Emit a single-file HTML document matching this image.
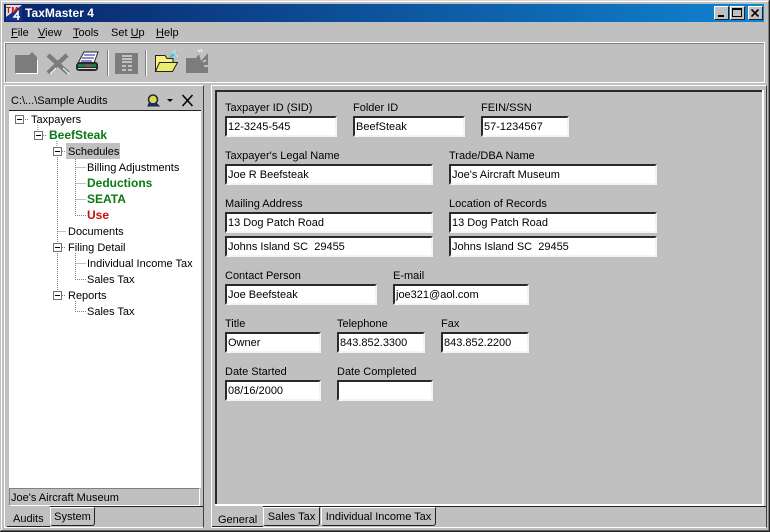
<!DOCTYPE html>
<html><head><meta charset="utf-8"><style>
html,body{margin:0;padding:0;background:#c0c0c0}
#w{position:relative;width:770px;height:532px;overflow:hidden;background:#c0c0c0;font:11px "Liberation Sans",sans-serif;color:#000}
#w div,#w svg{position:absolute}
.t{white-space:nowrap;line-height:14px;height:14px;margin-top:1px}
.f{box-sizing:border-box;background:#fff;height:21px;border:2px solid;border-color:#2a2a2a #f4f4f4 #f4f4f4 #2a2a2a;padding:3px 0 0 1px;white-space:nowrap;line-height:13px}
.t.b{font-weight:bold;font-size:12px;margin-top:0}
.g{color:#0a7a14}
.h{box-sizing:border-box;background:#fff;border:1px solid #707070;width:9px;height:9px}
.h i{position:absolute;left:1px;top:3px;width:5px;height:1px;background:#000}
.tb{box-sizing:border-box;border:1px solid #222;border-top:1px solid #fff;border-left:1px solid #fff;border-radius:0 0 3px 3px;text-align:center;line-height:18px;white-space:nowrap}
</style></head><body><div id="w">
<!-- window frame -->
<div style="left:0;top:0;width:770px;height:1px;background:#d8d8d8"></div>
<div style="left:1px;top:1px;width:768px;height:1px;background:#fff"></div>
<div style="left:1px;top:1px;width:1px;height:530px;background:#fff"></div>
<div style="left:769px;top:0;width:1px;height:532px;background:#222"></div>
<div style="left:768px;top:1px;width:1px;height:530px;background:#808080"></div>
<div style="left:0;top:531px;width:770px;height:1px;background:#222"></div>
<div style="left:1px;top:530px;width:768px;height:1px;background:#606060"></div>
<!-- title -->
<div style="left:4px;top:4px;width:760px;height:18px;background:linear-gradient(90deg,#0a246a,#1084d0 100%)"></div>
<svg style="left:6px;top:5px" width="16" height="16" viewBox="0 0 16 16"><rect width="16" height="16" fill="#1a2f8a"/><path d="M0 0H16L0 12Z" fill="#e4dcd8"/><text x="0" y="8" font-family="Liberation Sans" font-size="8" font-weight="bold" fill="#c01010" textLength="12">TM</text><path d="M12 15V7L8 12H14" stroke="#fff" stroke-width="1.600" fill="none"/></svg>
<div class="t" style="left:25px;top:5px;color:#fff;font-weight:bold;font-size:12px;letter-spacing:.05px">TaxMaster 4</div>
<div style="box-sizing:border-box;left:714px;top:6px;width:15px;height:14px;background:#c0c0c0;border:1px solid;border-color:#fff #222 #222 #fff"><div style="left:3px;top:8px;width:6px;height:2px;background:#000"></div></div>
<div style="box-sizing:border-box;left:730px;top:6px;width:15px;height:14px;background:#c0c0c0;border:1px solid;border-color:#fff #222 #222 #fff"><div style="box-sizing:border-box;left:1px;top:1px;width:10px;height:9px;border:1px solid #000;border-top-width:2px"></div></div>
<div style="box-sizing:border-box;left:748px;top:6px;width:15px;height:14px;background:#c0c0c0;border:1px solid;border-color:#fff #222 #222 #fff"><svg style="left:2px;top:2px" width="9" height="8"><path d="M0.500 0.500L7.500 7.500M7.500 0.500L0.500 7.500" stroke="#000" stroke-width="1.600"/></svg></div>
<!-- menu -->
<div class="t" style="left:11px;top:25px"><u>F</u>ile</div>
<div class="t" style="left:38px;top:25px"><u>V</u>iew</div>
<div class="t" style="left:73px;top:25px"><u>T</u>ools</div>
<div class="t" style="left:111px;top:25px">Set <u>U</u>p</div>
<div class="t" style="left:156px;top:25px"><u>H</u>elp</div>
<!-- toolbar group -->
<div style="box-sizing:border-box;left:4px;top:42px;width:761px;height:41px;border:1px solid #fff;box-shadow:inset 1px 1px 0 #808080"></div>
<svg style="left:0;top:44px" width="240" height="38" viewBox="0 44 240 38">
<path d="M15 55H29L32 52L37 57V73H15Z" fill="#7c7c7c"/><path d="M16 73.500H37.500V60" stroke="#fff" fill="none"/>
<path d="M48 55L68 73M67 55L48 73" stroke="#7c7c7c" stroke-width="4.500"/><path d="M50 74L56 68M63 68L69 74" stroke="#fff" stroke-width="1"/>
<path d="M84 52H98L94 63H78Z" fill="#fff" stroke="#222"/><path d="M84 55H95M82 58H94M81 61H92" stroke="#1818a0"/>
<path d="M78 62H96Q98 63 98 65V69Q97 71 94 71H80Q76 71 76 68V65Z" fill="#2a2a2a"/><rect x="78" y="64" width="18" height="3" fill="#1f7a50"/><rect x="86" y="65" width="5" height="2" fill="#c04040"/><rect x="78" y="68" width="18" height="1" fill="#ddd"/>
<path d="M107.500 50V76" stroke="#808080"/><path d="M108.500 50V76" stroke="#fff"/>
<rect x="115" y="53" width="23" height="21" fill="#7c7c7c"/><path d="M122 56h10M122 59h10M122 62h10M122 66h4M128 66h4M122 70h4M128 70h4" stroke="#d8d8d8" stroke-width="1.500"/>
<path d="M145.500 50V76" stroke="#808080"/><path d="M146.500 50V76" stroke="#fff"/>
<path d="M155.500 71.500V55.500H165L167 58.500H173V63" fill="#f8f080" stroke="#222"/><path d="M155.500 71.500L159.500 62.500H177.500L172.500 71.500Z" fill="#ecec70" stroke="#222"/>
<path d="M170 57L176 53" stroke="#38c8e8" stroke-width="2.500"/><path d="M172 51L178 57M175 50V54" stroke="#b8e8f0"/>
<path d="M186 58H196L199 54L201 61L208 53V73H186Z" fill="#7c7c7c"/><path d="M198 50L200 52M201 49L202 52M204 66L208 66M203 62L206 60" stroke="#fff"/>
</svg>
<!-- left panel -->
<div style="box-sizing:border-box;left:4px;top:85px;width:200px;height:443px;border:1px solid;border-color:#fff #404040 #fff #fff"></div>
<div class="t" style="left:11px;top:93px">C:\...\Sample Audits</div>
<svg style="left:147px;top:94px" width="47" height="13" viewBox="0 0 47 13"><circle cx="6" cy="5.500" r="4.500" fill="#d8d860" stroke="#222" stroke-width="1.500"/><path d="M2 9L1 12H12L9 9" fill="#1b2a8a" stroke="#222"/><path d="M20 5H26L23 8Z" fill="#000"/><path d="M35.500 1L45.500 12M45.500 1L35.500 12" stroke="#000" stroke-width="1.500"/></svg>
<div style="box-sizing:border-box;left:9px;top:110px;width:192px;height:378px;background:#fff;border-top:1px solid #222"></div>
<!-- tree lines -->
<svg style="left:8px;top:110px" width="100" height="215" viewBox="8 110 100 215"><g stroke="#808080" stroke-dasharray="1 1" fill="none" shape-rendering="crispEdges">
<path d="M23 119.500H28M38 125V131M43 135.500H47M57 141V147M62 151.500H65M57.500 157V243M57.500 231.500H66M62 247.500H66M57.500 253V291M62 295.500H66"/>
<path d="M75.500 157V215.500H86M75.500 167.500H86M75.500 183.500H86M75.500 199.500H86"/>
<path d="M75.500 253V279.500H86M75.500 263.500H86"/>
<path d="M75.500 301V311.500H86"/></g></svg>
<div class="h" style="left:15px;top:115px"><i></i></div>
<div class="h" style="left:34px;top:131px"><i></i></div>
<div class="h" style="left:53px;top:147px"><i></i></div>
<div class="h" style="left:53px;top:243px"><i></i></div>
<div class="h" style="left:53px;top:291px"><i></i></div>
<div class="t" style="left:31px;top:112px">Taxpayers</div>
<div class="t b g" style="left:49px;top:128px">BeefSteak</div>
<div style="left:66px;top:143px;width:54px;height:16px;background:#c0c0c0"></div>
<div class="t" style="left:68px;top:144px">Schedules</div>
<div class="t" style="left:87px;top:160px">Billing Adjustments</div>
<div class="t b g" style="left:87px;top:176px">Deductions</div>
<div class="t b g" style="left:87px;top:192px">SEATA</div>
<div class="t b" style="left:87px;top:208px;color:#c81010">Use</div>
<div class="t" style="left:68px;top:224px">Documents</div>
<div class="t" style="left:68px;top:240px">Filing Detail</div>
<div class="t" style="left:87px;top:256px">Individual Income Tax</div>
<div class="t" style="left:87px;top:272px">Sales Tax</div>
<div class="t" style="left:68px;top:288px">Reports</div>
<div class="t" style="left:87px;top:304px">Sales Tax</div>
<!-- status -->
<div style="box-sizing:border-box;left:9px;top:488px;width:191px;height:18px;border:1px solid;border-color:#808080 #fff #fff #808080"></div>
<div class="t" style="left:11px;top:490px">Joe's Aircraft Museum</div>
<div style="left:50px;top:506px;width:153px;height:1px;background:#222"></div>
<div style="left:7px;top:506px;width:43px;height:21px;background:#c0c0c0;border-bottom:1px solid #222;box-sizing:border-box"></div>
<div class="t" style="left:13px;top:511px">Audits</div>
<div class="tb" style="left:50px;top:507px;width:45px;height:19px">System</div>
<!-- right panel -->
<div style="box-sizing:border-box;left:211px;top:85px;width:556px;height:443px;border:1px solid;border-color:#fff #404040 #fff #fff"></div>
<div style="left:215px;top:90px;width:547px;height:2px;background:#2a2a2a"></div>
<div style="left:215px;top:90px;width:2px;height:414px;background:#2a2a2a"></div>
<div style="left:215px;top:504px;width:549px;height:2px;background:#fff"></div>
<div style="left:762px;top:90px;width:2px;height:416px;background:#fff"></div>
<div style="left:212px;top:506px;width:51px;height:21px;background:#c0c0c0;border-bottom:1px solid #222;box-sizing:border-box"></div>
<div style="left:263px;top:506px;width:503px;height:1px;background:#222"></div>
<div class="t" style="left:218px;top:512px">General</div>
<div class="tb" style="left:263px;top:507px;width:57px;height:19px">Sales Tax</div>
<div class="tb" style="left:321px;top:507px;width:115px;height:19px">Individual Income Tax</div>
<!-- form -->
<div class="t" style="left:225px;top:100px">Taxpayer ID (SID)</div>
<div class="t" style="left:353px;top:100px">Folder ID</div>
<div class="t" style="left:481px;top:100px">FEIN/SSN</div>
<div class="f" style="left:225px;top:116px;width:112px">12-3245-545</div>
<div class="f" style="left:353px;top:116px;width:112px">BeefSteak</div>
<div class="f" style="left:481px;top:116px;width:88px">57-1234567</div>
<div class="t" style="left:225px;top:148px">Taxpayer's Legal Name</div>
<div class="t" style="left:449px;top:148px">Trade/DBA Name</div>
<div class="f" style="left:225px;top:164px;width:208px">Joe R Beefsteak</div>
<div class="f" style="left:449px;top:164px;width:208px">Joe's Aircraft Museum</div>
<div class="t" style="left:225px;top:196px">Mailing Address</div>
<div class="t" style="left:449px;top:196px">Location of Records</div>
<div class="f" style="left:225px;top:212px;width:208px">13 Dog Patch Road</div>
<div class="f" style="left:449px;top:212px;width:208px">13 Dog Patch Road</div>
<div class="f" style="left:225px;top:236px;width:208px">Johns Island SC&nbsp; 29455</div>
<div class="f" style="left:449px;top:236px;width:208px">Johns Island SC&nbsp; 29455</div>
<div class="t" style="left:225px;top:268px">Contact Person</div>
<div class="t" style="left:393px;top:268px">E-mail</div>
<div class="f" style="left:225px;top:284px;width:152px">Joe Beefsteak</div>
<div class="f" style="left:393px;top:284px;width:136px">joe321@aol.com</div>
<div class="t" style="left:225px;top:316px">Title</div>
<div class="t" style="left:337px;top:316px">Telephone</div>
<div class="t" style="left:441px;top:316px">Fax</div>
<div class="f" style="left:225px;top:332px;width:96px">Owner</div>
<div class="f" style="left:337px;top:332px;width:88px">843.852.3300</div>
<div class="f" style="left:441px;top:332px;width:88px">843.852.2200</div>
<div class="t" style="left:225px;top:364px">Date Started</div>
<div class="t" style="left:337px;top:364px">Date Completed</div>
<div class="f" style="left:225px;top:380px;width:96px">08/16/2000</div>
<div class="f" style="left:337px;top:380px;width:96px"></div>
</div></body></html>
